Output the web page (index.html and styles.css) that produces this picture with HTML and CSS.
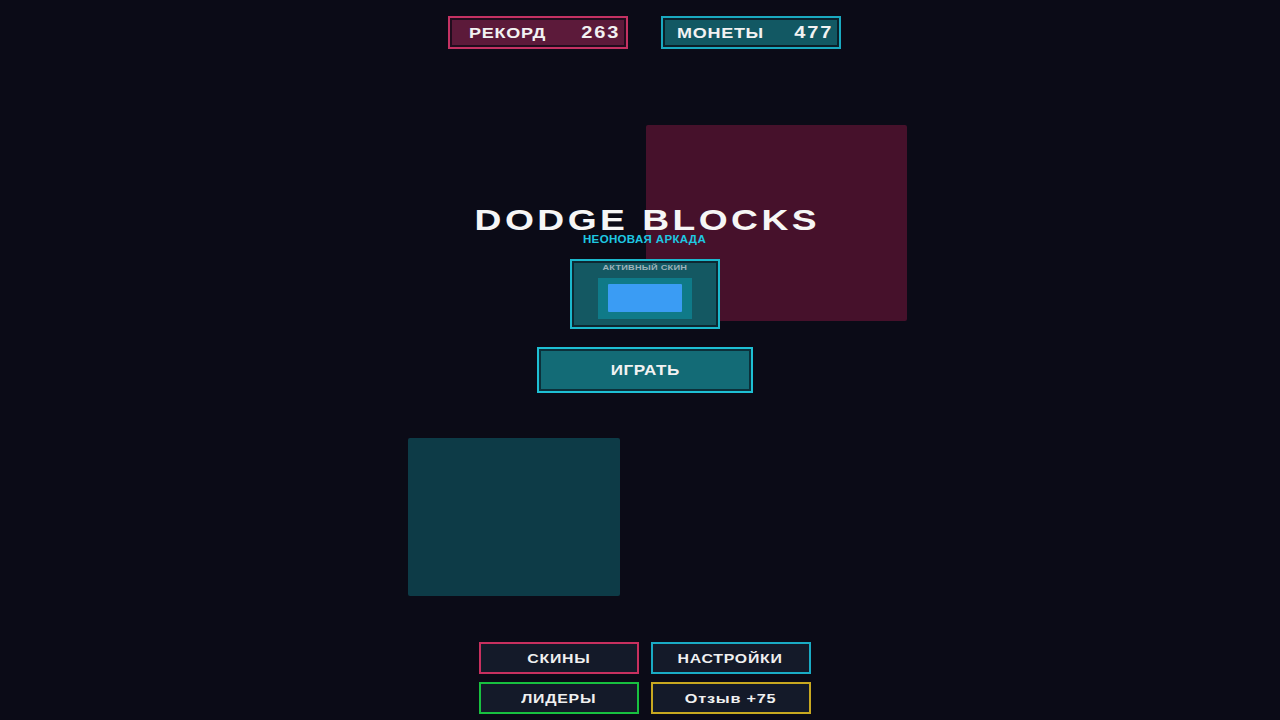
FILE: index.html
```html
<!DOCTYPE html>
<html lang="ru">
<head>
<meta charset="utf-8">
<title>Dodge Blocks</title>
<link rel="stylesheet" href="styles.css">
</head>
<body>
<div class="field">
  <div class="falling falling-pink"></div>
  <div class="falling falling-teal"></div>
</div>
<main class="screen">
  <div class="stats">
    <div class="stat stat-record"><span class="wide stat-label">РЕКОРД</span><span class="wide stat-value">263</span></div>
    <div class="stat stat-coins"><span class="wide stat-label">МОНЕТЫ</span><span class="wide stat-value">477</span></div>
  </div>
  <div class="title-group">
    <h1 class="title"><span class="wide">DODGE BLOCKS</span></h1>
    <div class="subtitle"><span class="wide">НЕОНОВАЯ АРКАДА</span></div>
  </div>
  <div class="skin">
    <div class="skin-label"><span class="wide">АКТИВНЫЙ СКИН</span></div>
    <div class="skin-preview"><div class="skin-block"></div></div>
  </div>
  <button class="play"><span class="wide">ИГРАТЬ</span></button>
  <nav class="menu">
    <button class="menu-btn menu-pink"><span class="wide">СКИНЫ</span></button>
    <button class="menu-btn menu-cyan"><span class="wide">НАСТРОЙКИ</span></button>
    <button class="menu-btn menu-green"><span class="wide">ЛИДЕРЫ</span></button>
    <button class="menu-btn menu-yellow"><span class="wide">Отзыв +75</span></button>
  </nav>
</main>
</body>
</html>
```

FILE: styles.css
```css
* { box-sizing: border-box; }
html, body {
  margin: 0;
  padding: 0;
}
body {
  width: 1280px;
  height: 720px;
  overflow: hidden;
  position: relative;
  background: #0b0b17;
  color: #f2f2f2;
  font-family: "Liberation Sans", Arial, sans-serif;
  font-weight: bold;
}
.wide {
  display: inline-block;
  transform: scaleX(1.2);
  transform-origin: center;
  white-space: nowrap;
}
.field {
  position: absolute;
  inset: 0;
}
.falling {
  position: absolute;
  border-radius: 2px;
}
.falling-pink {
  left: 646px;
  top: 125px;
  width: 261px;
  height: 196px;
  background: #46112b;
}
.falling-teal {
  left: 408px;
  top: 438px;
  width: 212px;
  height: 158px;
  background: #0d3b47;
}
.screen {
  position: relative;
  height: 720px;
  padding-left: 9px;
  display: flex;
  flex-direction: column;
  align-items: center;
}
.stats {
  margin-top: 16px;
  display: flex;
  gap: 33px;
}
.stat {
  width: 180px;
  height: 33px;
  display: flex;
  align-items: center;
  justify-content: space-between;
  padding: 0 7px 0 19px;
  border: 2px solid;
  font-size: 15px;
  box-shadow: inset 0 0 0 2px rgba(8, 8, 18, 0.7);
}
.stat-label {
  letter-spacing: 0.6px;
  transform-origin: left center;
}
.stat-value {
  font-size: 16px;
  letter-spacing: 1.6px;
  margin-right: -1.6px;
  transform-origin: right center;
}
.stat .stat-value { transform: scaleX(1.25); }
.stat-record {
  border-color: #c43263;
  background: #5c1a3a;
}
.stat-coins {
  border-color: #1aa9c0;
  background: #125863;
  padding-left: 14px;
}
.title-group {
  margin-top: 156px;
  display: flex;
  flex-direction: column;
  align-items: center;
}
.title {
  margin: 0;
  font-size: 30px;
  line-height: 30px;
  letter-spacing: 2.8px;
  padding-left: 5px;
  color: #f6f6f6;
}
.title .wide { transform: scaleX(1.24); }
.subtitle {
  margin-top: 0;
  font-size: 10px;
  line-height: 10px;
  letter-spacing: 0.3px;
  color: #1ec8e2;
}
.subtitle .wide { transform: scaleX(1.15); }
.skin {
  margin-top: 14px;
  width: 150px;
  height: 70px;
  border: 2px solid #1cb8cc;
  background: #145862;
  box-shadow: inset 0 0 0 2px rgba(8, 8, 18, 0.6);
  display: flex;
  flex-direction: column;
  align-items: center;
  padding-top: 3px;
}
.skin-label {
  font-size: 8px;
  line-height: 8px;
  letter-spacing: 0.2px;
  color: #9fb3ba;
}
.skin-label .wide { transform: scaleX(1.15); }
.skin-preview {
  margin-top: 6px;
  width: 94px;
  height: 41px;
  background: #0f7a88;
  padding: 6px 10px 7px;
}
.skin-block {
  width: 100%;
  height: 100%;
  background: #3a9cf4;
  border-radius: 1px;
}
.play {
  margin-top: 18px;
  width: 216px;
  height: 46px;
  border: 2px solid #1ec0d4;
  background: #136b76;
  box-shadow: inset 0 0 0 2px rgba(8, 8, 18, 0.6);
  color: #f2f2f2;
  font-family: inherit;
  font-weight: bold;
  font-size: 14px;
  letter-spacing: 0.4px;
  padding: 0 0 0 2px;
}
.play .wide { transform: scaleX(1.22); }
.menu {
  margin-top: auto;
  margin-bottom: 6px;
  display: grid;
  grid-template-columns: 160px 160px;
  grid-auto-rows: 32px;
  column-gap: 12px;
  row-gap: 8px;
}
.menu-btn {
  border: 2px solid;
  background: #141a29;
  color: #f0f0f0;
  font-family: inherit;
  font-weight: bold;
  font-size: 13px;
  letter-spacing: 0.6px;
  padding: 0;
}
.menu-btn .wide { transform: scaleX(1.22); }
.menu-pink { border-color: #c8305f; }
.menu-cyan { border-color: #1aabc4; }
.menu-green { border-color: #18c040; }
.menu-yellow { border-color: #c8a820; }
.menu-yellow .wide { transform: scaleX(1.25); }
```
